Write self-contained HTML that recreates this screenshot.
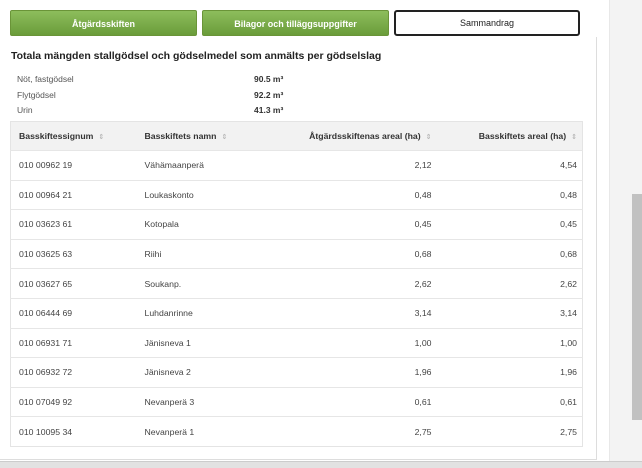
<!DOCTYPE html>
<html><head><meta charset="utf-8"><style>
*{box-sizing:border-box;margin:0;padding:0}
body{width:642px;height:468px;overflow:hidden;background:#fff;font-family:"Liberation Sans",sans-serif;color:#333;position:relative}
.tab{position:absolute;top:10px;height:26px;font-size:9px;text-align:center;line-height:26px;border-radius:2px}
.g{background:linear-gradient(#8dbd5c,#6a9c3a);color:#fff;font-weight:bold;border:1px solid #6a9438}
.w{background:#fff;border:2px solid #222;color:#222;border-radius:3px;line-height:22px}
.panel{position:absolute;left:0;top:37px;width:597px;height:423px;border-right:1px solid #ddd;border-bottom:1px solid #ddd}
h1{position:absolute;left:11px;top:50px;font-size:10.5px;font-weight:bold;color:#222}
.s{position:absolute;font-size:8.5px;color:#555}
.v{position:absolute;left:254px;font-size:8.5px;font-weight:bold;color:#333}
table{position:absolute;left:10px;top:121px;width:573px;border-collapse:collapse;font-size:8.7px;border:1px solid #e4e4e4}
th{background:#f2f2f2;height:29px;font-weight:bold;color:#333;text-align:left;padding-left:8px}
td{height:29.6px;border-top:1px solid #e6e6e6;padding-left:8px;color:#444}
.r{text-align:right;padding-right:5px}
.ar{color:#aaa;font-weight:normal;font-size:7px;margin-left:5px}
.sb{position:absolute;left:609px;top:0;width:33px;height:462px;background:#f3f3f3;border-left:1px solid #e8e8e8}
.th{position:absolute;left:632px;top:194px;width:10px;height:226px;background:#c1c1c1}
.bot{position:absolute;left:0;top:461px;width:642px;height:7px;background:#e2e2e2;border-top:1px solid #ccc}
</style></head><body>
<div class="tab g" style="left:10px;width:187px">Åtgärdsskiften</div>
<div class="tab g" style="left:202px;width:187px">Bilagor och tilläggsuppgifter</div>
<div class="tab w" style="left:394px;width:186px">Sammandrag</div>
<div class="panel"></div>
<h1>Totala mängden stallgödsel och gödselmedel som anmälts per gödselslag</h1>
<div class="s" style="left:17px;top:74px">Nöt, fastgödsel</div><div class="v" style="top:74px">90.5 m³</div>
<div class="s" style="left:17px;top:90px">Flytgödsel</div><div class="v" style="top:90px">92.2 m³</div>
<div class="s" style="left:17px;top:105px">Urin</div><div class="v" style="top:105px">41.3 m³</div>
<table>
<tr><th style="width:126px">Basskiftessignum<span class="ar">⇕</span></th><th style="width:150px">Basskiftets namn<span class="ar">⇕</span></th><th class="r" style="width:150px">Åtgärdsskiftenas areal (ha)<span class="ar">⇕</span></th><th class="r">Basskiftets areal (ha)<span class="ar">⇕</span></th></tr>
<tr><td>010 00962 19</td><td>Vähämaanperä</td><td class="r">2,12</td><td class="r">4,54</td></tr>
<tr><td>010 00964 21</td><td>Loukaskonto</td><td class="r">0,48</td><td class="r">0,48</td></tr>
<tr><td>010 03623 61</td><td>Kotopala</td><td class="r">0,45</td><td class="r">0,45</td></tr>
<tr><td>010 03625 63</td><td>Riihi</td><td class="r">0,68</td><td class="r">0,68</td></tr>
<tr><td>010 03627 65</td><td>Soukanp.</td><td class="r">2,62</td><td class="r">2,62</td></tr>
<tr><td>010 06444 69</td><td>Luhdanrinne</td><td class="r">3,14</td><td class="r">3,14</td></tr>
<tr><td>010 06931 71</td><td>Jänisneva 1</td><td class="r">1,00</td><td class="r">1,00</td></tr>
<tr><td>010 06932 72</td><td>Jänisneva 2</td><td class="r">1,96</td><td class="r">1,96</td></tr>
<tr><td>010 07049 92</td><td>Nevanperä 3</td><td class="r">0,61</td><td class="r">0,61</td></tr>
<tr><td>010 10095 34</td><td>Nevanperä 1</td><td class="r">2,75</td><td class="r">2,75</td></tr>
</table>
<div class="sb"></div><div class="th"></div>
<div class="bot"></div>
</body></html>
